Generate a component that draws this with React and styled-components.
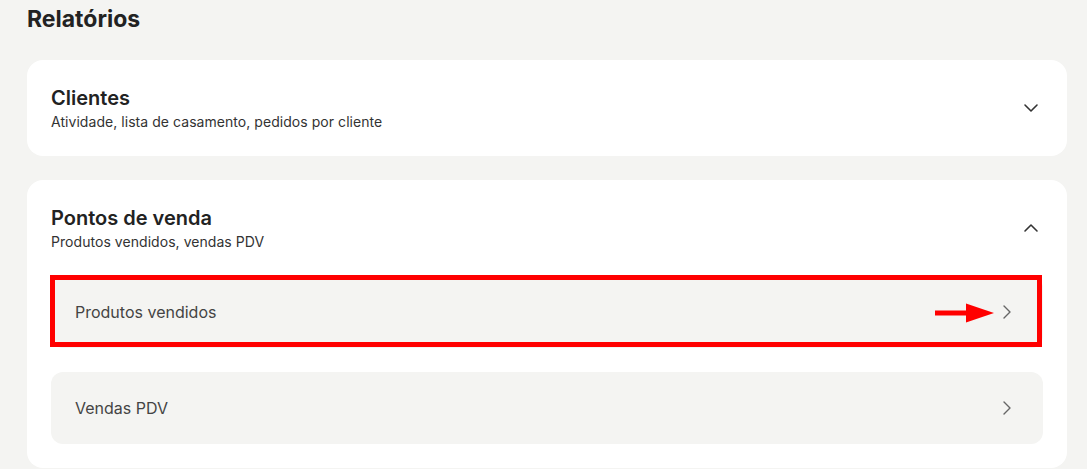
import React from "react";
import styled, { createGlobalStyle } from "styled-components";

const GlobalStyle = createGlobalStyle`
  html, body {
    margin: 0;
    padding: 0;
    background: #f4f4f2;
  }
  body {
    font-family: Inter, "Noto Sans", sans-serif;
    color: #222;
    -webkit-font-smoothing: antialiased;
  }
  * { box-sizing: border-box; }
`;

const Page = styled.main`
  padding: 0 20px 0 27px;
`;

const PageTitle = styled.h1`
  margin: 0 0 22px;
  font-size: 23px;
  line-height: 38px;
  font-weight: 700;
  color: #222;
`;

const Stack = styled.div`
  display: flex;
  flex-direction: column;
  gap: 24px;
`;

const Card = styled.section`
  background: #ffffff;
  border-radius: 16px;
  padding: 24px;
  display: flex;
  flex-direction: column;
  gap: 24px;
`;

const CardHeader = styled.button`
  all: unset;
  display: flex;
  align-items: center;
  justify-content: space-between;
  cursor: pointer;
`;

const HeaderText = styled.div`
  display: flex;
  flex-direction: column;
`;

const CardTitle = styled.h2`
  margin: 0;
  font-size: 20px;
  line-height: 28px;
  font-weight: 600;
  color: #222;
`;

const CardSubtitle = styled.p`
  margin: 0;
  font-size: 14px;
  line-height: 20px;
  font-weight: 400;
  color: #333;
  letter-spacing: 0.05px;
`;

const ItemList = styled.div`
  display: flex;
  flex-direction: column;
  gap: 24px;
`;

const Item = styled.a`
  position: relative;
  display: flex;
  align-items: center;
  justify-content: space-between;
  height: 72px;
  padding: 0 24px;
  background: #f4f4f2;
  border-radius: 12px;
  font-size: 16px;
  color: #444;
  text-decoration: none;
  cursor: pointer;
`;

const Highlight = styled.span`
  position: absolute;
  left: -1px;
  top: -1px;
  right: 1px;
  bottom: 1px;
  border: 5px solid #ff0000;
  pointer-events: none;
`;

const Pointer = styled.svg`
  position: absolute;
  right: 48px;
  top: 50%;
  transform: translateY(-50%);
  margin-top: 1px;
`;

const Chevron = ({ dir = "down", color = "#444", width = 1.6 }) => {
  const paths = {
    down: "m6 9 6 6 6-6",
    up: "m18 15-6-6-6 6",
    right: "m9 6 6 6-6 6",
  };
  return (
    <svg width="24" height="24" viewBox="0 0 24 24" fill="none" stroke={color}
      strokeWidth={width} strokeLinecap="round" strokeLinejoin="round">
      <path d={paths[dir]} />
    </svg>
  );
};

const sections = [
  {
    title: "Clientes",
    subtitle: "Atividade, lista de casamento, pedidos por cliente",
    open: false,
    items: [],
  },
  {
    title: "Pontos de venda",
    subtitle: "Produtos vendidos, vendas PDV",
    open: true,
    items: [
      { label: "Produtos vendidos", marked: true },
      { label: "Vendas PDV", marked: false },
    ],
  },
];

export default function App() {
  return (
    <>
      <GlobalStyle />
      <Page>
        <PageTitle>Relatórios</PageTitle>
        <Stack>
          {sections.map((s) => (
            <Card key={s.title}>
              <CardHeader>
                <HeaderText>
                  <CardTitle>{s.title}</CardTitle>
                  <CardSubtitle>{s.subtitle}</CardSubtitle>
                </HeaderText>
                <Chevron dir={s.open ? "up" : "down"} color="#333" />
              </CardHeader>
              {s.open && (
                <ItemList>
                  {s.items.map((it) => (
                    <Item key={it.label}>
                      {it.label}
                      <Chevron dir="right" color="#666" width={1.4} />
                      {it.marked && (
                        <>
                          <Highlight />
                          <Pointer width="60" height="20" viewBox="0 0 60 20">
                            <rect x="0" y="7.5" width="32" height="5" fill="#ff0000" />
                            <polygon points="31,0.5 59,10 31,19.5" fill="#ff0000" />
                          </Pointer>
                        </>
                      )}
                    </Item>
                  ))}
                </ItemList>
              )}
            </Card>
          ))}
        </Stack>
      </Page>
    </>
  );
}
